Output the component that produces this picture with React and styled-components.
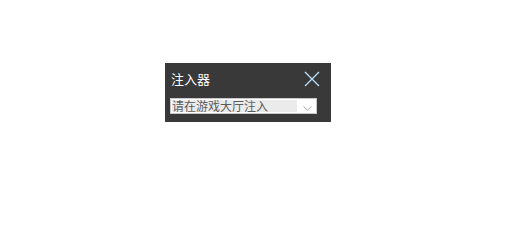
import React from 'react';
import styled, { createGlobalStyle } from 'styled-components';

const GlobalStyle = createGlobalStyle`
  html, body {
    margin: 0;
    padding: 0;
    background: #ffffff;
  }
  body {
    font-family: "Noto Sans CJK SC", "Microsoft YaHei", sans-serif;
  }
`;

const Page = styled.div`
  width: 512px;
  height: 224px;
  padding: 63px 0 0 165px;
  box-sizing: border-box;
`;

const Panel = styled.div`
  width: 166px;
  height: 59px;
  box-sizing: border-box;
  background: #393939;
  padding: 0 11px 0 5px;
  display: flex;
  flex-direction: column;
`;

const Header = styled.div`
  height: 31px;
  display: flex;
  align-items: center;
  justify-content: space-between;
`;

const Title = styled.span`
  color: #ffffff;
  font-size: 13px;
  line-height: 15px;
  padding-left: 1px;
  margin-top: -1px;
`;

const CloseButton = styled.button`
  width: 16px;
  height: 16px;
  padding: 0;
  border: 0;
  background: transparent;
  display: flex;
  cursor: pointer;
`;

const Combo = styled.div`
  margin-top: 4px;
  width: 147px;
  height: 16px;
  box-sizing: border-box;
  border: 1px solid #c9c9c9;
  background: #ffffff;
  padding: 1px;
  display: flex;
  align-items: stretch;
`;

const ComboText = styled.div`
  width: 125px;
  height: 12px;
  background: #ebebeb;
  color: #5c5c5c;
  font-size: 12px;
  line-height: 12px;
  white-space: nowrap;
`;

const Arrow = styled.div`
  flex: 1;
  display: flex;
  align-items: flex-end;
  padding: 0 0 1px 6px;
`;

function CloseIcon() {
  return (
    <svg width="16" height="16" viewBox="0 0 16 16">
      <path d="M1 1 L15 15 M15 1 L1 15" stroke="#b4dcf8" strokeWidth="1.4" fill="none" />
    </svg>
  );
}

function Chevron() {
  return (
    <svg width="9" height="5" viewBox="0 0 9 5">
      <path d="M0.5 0.5 L4.5 4.2 L8.5 0.5" stroke="#a3a3a3" strokeWidth="1" fill="none" />
    </svg>
  );
}

export default function App() {
  return (
    <Page>
      <GlobalStyle />
      <Panel>
        <Header>
          <Title>注入器</Title>
          <CloseButton aria-label="关闭">
            <CloseIcon />
          </CloseButton>
        </Header>
        <Combo>
          <ComboText>请在游戏大厅注入</ComboText>
          <Arrow>
            <Chevron />
          </Arrow>
        </Combo>
      </Panel>
    </Page>
  );
}
